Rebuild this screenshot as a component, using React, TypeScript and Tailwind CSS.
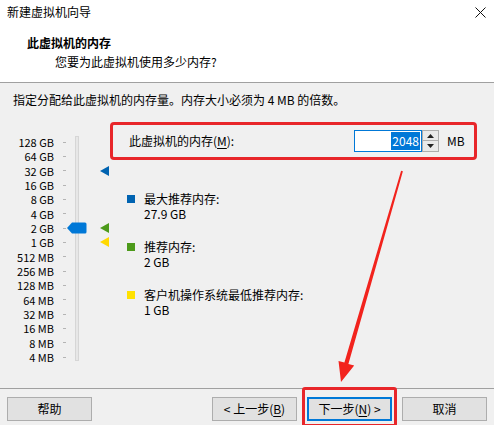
import React from 'react';

const FONT = '"Noto Sans CJK SC", "Noto Sans", sans-serif';

const sizes = [
  '128 GB', '64 GB', '32 GB', '16 GB', '8 GB', '4 GB', '2 GB', '1 GB',
  '512 MB', '256 MB', '128 MB', '64 MB', '32 MB', '16 MB', '8 MB', '4 MB',
];

const LeftTriangle: React.FC<{ color: string; className: string }> = ({ color, className }) => (
  <svg width="9" height="10" viewBox="0 0 9 10" className={className}>
    <polygon points="0,5 9,0 9,10" fill={color} />
  </svg>
);

const MemorySlider: React.FC = () => (
  <div className="relative w-[110px] h-full shrink-0">
    <div className="flex">
      <div className="w-[54px] pt-[13px] flex flex-col text-[11px] text-right">
        {sizes.map(s => (
          <div key={s} className="h-[14.33px] leading-[14px] whitespace-nowrap">{s}</div>
        ))}
      </div>
      <div className="w-[4px] ml-[9px] pt-[13px] flex flex-col">
        {sizes.map(s => (
          <div key={s} className="h-[14.33px] flex items-center">
            <div className="w-[3px] h-px bg-[#b4b4b4]" />
          </div>
        ))}
      </div>
      <div className="ml-[8px] mt-[14px] w-[4px] h-[225px] bg-[#e7e7e7] border border-[#d6d6d6]" />
    </div>
    {/* thumb */}
    <svg width="20" height="12" viewBox="0 0 20 12" className="absolute left-[67px] top-[100px]">
      <path d="M0 6 L5 0.5 H18 Q19.5 0.5 19.5 2 V10 Q19.5 11.5 18 11.5 H5 Z" fill="#0078d7" />
    </svg>
    <LeftTriangle color="#0063b1" className="absolute left-[100px] top-[44px]" />
    <LeftTriangle color="#4c9a1a" className="absolute left-[100px] top-[101px]" />
    <LeftTriangle color="#ffd800" className="absolute left-[100px] top-[115px]" />
  </div>
);

const LegendItem: React.FC<{ color: string; label: string; value: string }> = ({ color, label, value }) => (
  <div className="flex items-start">
    <div className={`w-[8px] h-[8px] mt-[3.5px] ${color}`} />
    <div className="ml-[9px] leading-[15px]">
      <div>{label}</div>
      <div>{value}</div>
    </div>
  </div>
);

const Button: React.FC<{ children: React.ReactNode; primary?: boolean }> = ({ children, primary }) => (
  <button
    className={`w-[85px] h-[24px] bg-[#e1e1e1] text-[12px] leading-[20px] text-black ${
      primary ? 'border-2 border-[#0078d7]' : 'border border-[#adadad]'
    }`}
  >
    {children}
  </button>
);

export default function App() {
  return (
    <div
      className="relative w-[494px] h-[425px] bg-[#f0f0f0] flex flex-col overflow-hidden text-[12px] text-black"
      style={{ fontFamily: FONT }}
    >
      {/* header */}
      <div className="h-[83px] bg-white border-b border-[#a0a0a0] shrink-0">
        <div className="h-[24px] flex items-center justify-between pl-[7px] pr-[8px]">
          <span className="leading-[16px]">新建虚拟机向导</span>
          <svg width="11" height="11" viewBox="0 0 11 11">
            <path d="M0.5 0.5 L10.5 10.5 M10.5 0.5 L0.5 10.5" stroke="#111" strokeWidth="1" />
          </svg>
        </div>
        <div className="pl-[27px] mt-[11px] leading-[16px] font-bold">此虚拟机的内存</div>
        <div className="pl-[55px] mt-[3px] leading-[16px]">您要为此虚拟机使用多少内存?</div>
      </div>

      {/* body */}
      <div className="flex-1 flex flex-col">
        <div className="pl-[13px] pt-[9px] leading-[16px]">
          指定分配给此虚拟机的内存量。内存大小必须为 4 MB 的倍数。
        </div>
        <div className="flex mt-[14px] flex-1">
          <MemorySlider />
          <div className="flex flex-col">
            <div className="w-[367px] h-[38px] border-[3px] border-[#e8262a] rounded-[4px] flex items-center">
              <span className="pl-[16px] leading-[16px]">
                此虚拟机的内存(<span className="underline underline-offset-2">M</span>):
              </span>
              <div className="flex-1" />
              <div className="w-[68px] h-[22px] bg-white border border-[#0078d7] flex items-center justify-end pr-[1px]">
                <span className="bg-[#0078d7] text-white leading-[18px] px-[1px]">2048</span>
              </div>
              <div className="w-[17px] h-[22px] flex flex-col">
                <div className="h-[11px] border border-[#adadad] bg-[#e9e9e9] flex items-center justify-center">
                  <svg width="7" height="4" viewBox="0 0 7 4"><polygon points="3.5,0 7,4 0,4" fill="#222" /></svg>
                </div>
                <div className="h-[11px] border border-t-0 border-[#adadad] bg-[#e9e9e9] flex items-center justify-center">
                  <svg width="7" height="4" viewBox="0 0 7 4"><polygon points="0,0 7,0 3.5,4" fill="#222" /></svg>
                </div>
              </div>
              <span className="ml-[8px] w-[27px] leading-[16px]">MB</span>
            </div>
            <div className="pl-[17px] mt-[31px] flex flex-col gap-[18px]">
              <LegendItem color="bg-[#0063b1]" label="最大推荐内存:" value="27.9 GB" />
              <LegendItem color="bg-[#4c9a1a]" label="推荐内存:" value="2 GB" />
              <LegendItem color="bg-[#ffe100]" label="客户机操作系统最低推荐内存:" value="1 GB" />
            </div>
          </div>
        </div>
      </div>

      {/* footer */}
      <div className="h-[37px] shrink-0 border-t border-[#a0a0a0] flex justify-between px-[7px] pt-[8px]">
        <Button>帮助</Button>
        <div className="flex gap-[10px]">
          <Button>
            &lt; 上一步(<span className="underline underline-offset-2">B</span>)
          </Button>
          <div className="relative">
            <Button primary>
              下一步(<span className="underline underline-offset-2">N</span>) &gt;
            </Button>
            <div className="absolute left-[-5px] top-[-10px] w-[95px] h-[40px] border-[3px] border-[#e8262a] rounded-[3px] pointer-events-none" />
          </div>
          <Button>取消</Button>
        </div>
      </div>

      {/* annotation arrow */}
      <svg className="absolute inset-0 pointer-events-none" width="494" height="425" viewBox="0 0 494 425">
        <polygon
          points="402.9,171.2 401.1,170.8 344.4,362.6 338.5,361.0 341,382 354.2,365.5 348.4,364.1"
          fill="#f2231d"
        />
      </svg>
    </div>
  );
}
